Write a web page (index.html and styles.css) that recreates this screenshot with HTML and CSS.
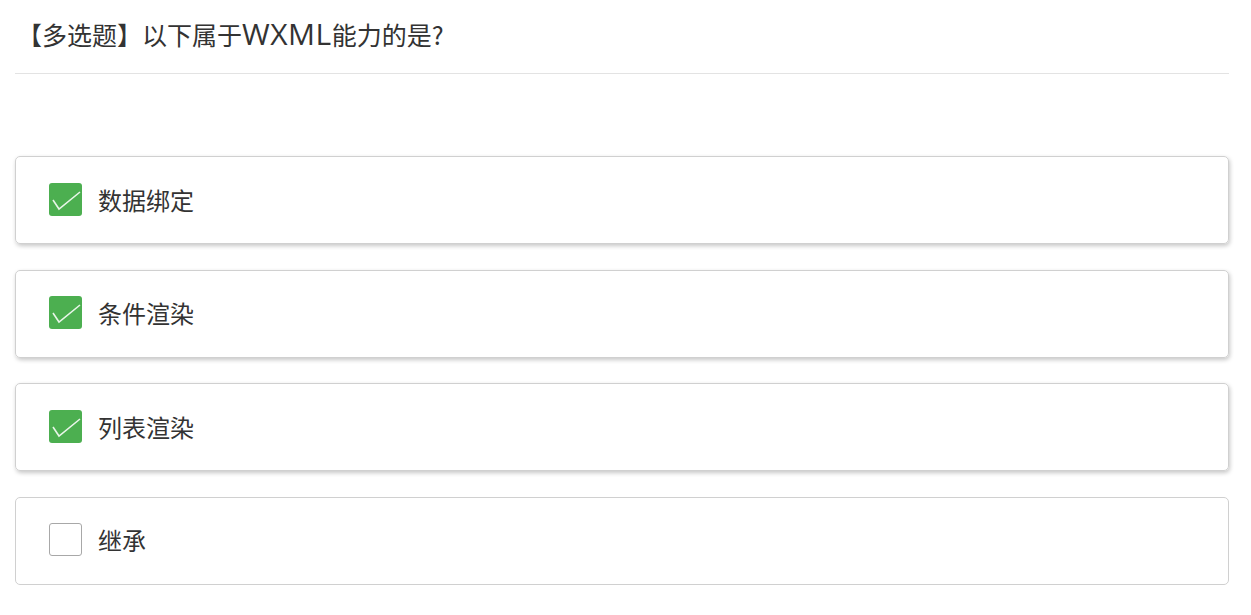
FILE: index.html
```html
<!DOCTYPE html>
<html lang="zh">
<head>
<meta charset="utf-8">
<link rel="stylesheet" href="styles.css">
</head>
<body>
<div class="page">
  <div class="title">【多选题】以下属于<span class="latin">WXML</span>能力的是?</div>
  <div class="options">
    <div class="option checked">
      <span class="box"><svg viewBox="0 0 32 32" width="32" height="32"><polyline points="4,17 10,26 31,9" fill="none" stroke="#e8f5e8" stroke-width="1.6"/></svg></span>
      <span class="label">数据绑定</span>
    </div>
    <div class="option checked">
      <span class="box"><svg viewBox="0 0 32 32" width="32" height="32"><polyline points="4,17 10,26 31,9" fill="none" stroke="#e8f5e8" stroke-width="1.6"/></svg></span>
      <span class="label">条件渲染</span>
    </div>
    <div class="option checked">
      <span class="box"><svg viewBox="0 0 32 32" width="32" height="32"><polyline points="4,17 10,26 31,9" fill="none" stroke="#e8f5e8" stroke-width="1.6"/></svg></span>
      <span class="label">列表渲染</span>
    </div>
    <div class="option">
      <span class="box empty"></span>
      <span class="label">继承</span>
    </div>
  </div>
</div>
</body>
</html>
```

FILE: styles.css
```css
html, body {
  margin: 0;
  padding: 0;
  background: #fff;
}
body {
  font-family: "Noto Sans CJK SC", "Noto Sans", sans-serif;
  color: #333;
}
.page {
  width: 1214px;
  padding-left: 15px;
}
.title {
  height: 73px;
  border-bottom: 1px solid #e3e3e3;
  padding-left: 2px;
  font-size: 25px;
  line-height: 68px;
  box-sizing: content-box;
}
.latin {
  font-family: "Open Sans", sans-serif;
  font-size: 30px;
  line-height: 1;
  letter-spacing: 0.5px;
}
.options {
  margin-top: 82px;
  display: flex;
  flex-direction: column;
  gap: 25.67px;
}
.option {
  height: 88px;
  box-sizing: border-box;
  border: 1px solid #d0d0d0;
  border-radius: 5px;
  display: flex;
  align-items: center;
  padding-left: 33px;
  padding-bottom: 2px;
}
.option.checked {
  box-shadow: 1px 2px 4px rgba(0, 0, 0, 0.22);
}
.box {
  width: 33px;
  height: 33px;
  border-radius: 3px;
  background: #4caf50;
  display: flex;
  overflow: hidden;
}
.box svg {
  display: block;
}
.box.empty {
  width: 31px;
  height: 31px;
  background: #fff;
  border: 1px solid #a8a8a8;
}
.label {
  margin-left: 16px;
  font-size: 24px;
  color: #333;
}
```
